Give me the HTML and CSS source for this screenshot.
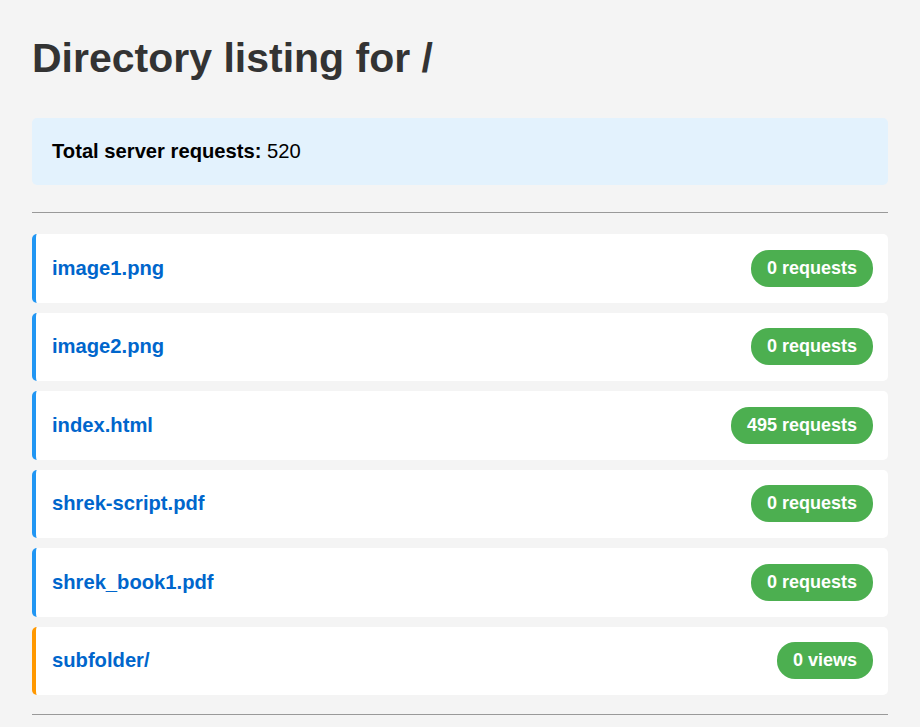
FILE: index.html
```html
<!DOCTYPE html>
<html lang="en">
<head>
<meta charset="utf-8">
<title>Directory listing for /</title>
<link rel="stylesheet" href="styles.css">
</head>
<body>
<div class="page">
  <h1 class="title">Directory listing for /</h1>
  <div class="stats"><strong>Total server requests:</strong> 520</div>
  <hr class="rule">
  <ul class="listing">
    <li class="entry file"><a href="#" class="name">image1.png</a><span class="badge">0 requests</span></li>
    <li class="entry file"><a href="#" class="name">image2.png</a><span class="badge">0 requests</span></li>
    <li class="entry file"><a href="#" class="name">index.html</a><span class="badge">495 requests</span></li>
    <li class="entry file"><a href="#" class="name">shrek-script.pdf</a><span class="badge">0 requests</span></li>
    <li class="entry file"><a href="#" class="name">shrek_book1.pdf</a><span class="badge">0 requests</span></li>
    <li class="entry folder"><a href="#" class="name">subfolder/</a><span class="badge">0 views</span></li>
  </ul>
  <hr class="rule rule-bottom">
</div>
</body>
</html>
```

FILE: styles.css
```css
html, body {
  margin: 0;
  padding: 0;
}
body {
  background: #f4f4f4;
  font-family: "Liberation Sans", Arial, sans-serif;
  color: #333;
}
.page {
  padding: 35px 32px 0 32px;
}
.title {
  margin: 0 0 37px 0;
  font-size: 41px;
  line-height: 46px;
  font-weight: bold;
  color: #333;
}
.stats {
  background: #e3f2fd;
  border-radius: 5px;
  padding: 22px 20px;
  font-size: 20.2px;
  line-height: 23px;
  color: #000;
}
.stats strong {
  font-weight: bold;
}
.rule {
  border: none;
  border-top: 1px solid #999;
  height: 0;
  margin: 27px 0 21px 0;
}
.rule-bottom {
  margin: 19px 0 0 0;
}
.listing {
  list-style: none;
  margin: 0;
  padding: 0;
  display: flex;
  flex-direction: column;
  gap: 10px;
}
.entry {
  display: flex;
  align-items: center;
  justify-content: space-between;
  background: #fff;
  border-radius: 5px;
  border-left: 4px solid #2196f3;
  padding: 15.75px 15px 15.75px 16px;
}
.entry.folder {
  border-left-color: #ff9800;
}
.name {
  color: #0066cc;
  font-weight: bold;
  font-size: 20.2px;
  text-decoration: none;
}
.badge {
  background: #4caf50;
  color: #fff;
  font-weight: bold;
  font-size: 18px;
  line-height: 21px;
  padding: 8px 16px;
  border-radius: 18px;
}
```
